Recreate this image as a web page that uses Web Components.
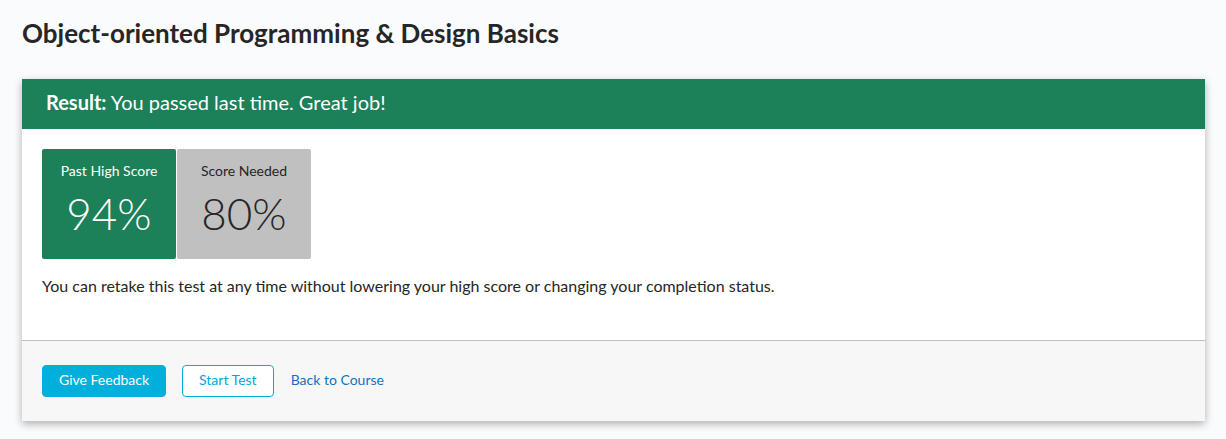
<!DOCTYPE html>
<html lang="en">
<head>
<meta charset="utf-8">
<title>Object-oriented Programming &amp; Design Basics</title>
<style>
  body { margin: 0; background: #fafbfd; color: #262626; font-family: Lato, "Open Sans", sans-serif; font-size: 16px; line-height: 24px; }
</style>
</head>
<body>
<test-page>
  <span slot="title">Object-oriented Programming &amp; Design Basics</span>
  <result-card>
    <span slot="status">You passed last time. Great job!</span>
    <score-tile tone="passed" label="Past High Score">94%</score-tile>
    <score-tile label="Score Needed">80%</score-tile>
    <span slot="note">You can retake this test at any time without lowering your high score or changing your completion status.</span>
    <action-button slot="actions" kind="primary">Give Feedback</action-button>
    <action-button slot="actions">Start Test</action-button>
    <action-link slot="actions" to="#course">Back to Course</action-link>
  </result-card>
</test-page>

<script>
  class BaseElement extends HTMLElement {
    constructor() {
      super();
      const template = document.createElement('template');
      template.innerHTML = this.constructor.markup;
      this.attachShadow({ mode: 'open' }).append(template.content.cloneNode(true));
    }
  }

  class TestPage extends BaseElement {
    static markup = `
      <style>
        :host { display: block; }
        main { padding: 15px 21px 18px 22px; }
        h1 { margin: 0 0 28px; font-size: 26px; line-height: 36px; font-weight: 700; }
      </style>
      <main>
        <h1><slot name="title"></slot></h1>
        <slot></slot>
      </main>`;
  }

  class ResultCard extends BaseElement {
    static markup = `
      <style>
        :host { display: block; background: #fff; box-shadow: 0 3px 8px rgba(0, 0, 0, .3); }
        header { padding: 9px 24px 13px; background: #1c8058; color: #fff; font-size: 20px; line-height: 28px; }
        strong { font-weight: 700; }
        .body { padding: 20px 20px 42px; }
        .scores { display: flex; gap: 1px; }
        p { margin: 15px 0 0; }
        footer { display: flex; align-items: center; gap: 16px; padding: 24px 20px; border-top: 1px solid #bfbfbf; background: #f7f7f7; }
      </style>
      <header><strong>Result:</strong> <slot name="status"></slot></header>
      <div class="body">
        <div class="scores"><slot></slot></div>
        <p><slot name="note"></slot></p>
      </div>
      <footer><slot name="actions"></slot></footer>`;
  }

  class ScoreTile extends BaseElement {
    static markup = `
      <style>
        :host { display: block; box-sizing: border-box; width: 134px; padding: 12px 0 14px; border-radius: 2px; background: #c0c0c0; text-align: center; }
        :host([tone="passed"]) { background: #1c8058; color: #fff; }
        .label { font-size: 14px; line-height: 20px; }
        .value { font-size: 44px; line-height: 64px; font-weight: 300; }
      </style>
      <div class="label"></div>
      <div class="value"><slot></slot></div>`;
    connectedCallback() {
      this.shadowRoot.querySelector('.label').textContent = this.getAttribute('label');
    }
  }

  class ActionButton extends BaseElement {
    static markup = `
      <style>
        :host { display: block; }
        button { display: block; margin: 0; padding: 4px 16px 6px; border: 1px solid #00afdb; border-radius: 4px; background: #fff; color: #00a8d8; font: inherit; font-size: 14px; line-height: 20px; cursor: pointer; }
        :host([kind="primary"]) button { background: #00afdb; color: #fff; }
      </style>
      <button type="button"><slot></slot></button>`;
  }

  class ActionLink extends BaseElement {
    static markup = `
      <style>
        :host { display: block; }
        a { display: block; padding: 4px 0 6px; border: 1px solid transparent; color: #1170c9; font-size: 14px; line-height: 20px; text-decoration: none; }
      </style>
      <a><slot></slot></a>`;
    connectedCallback() {
      this.shadowRoot.querySelector('a').href = this.getAttribute('to');
    }
  }

  customElements.define('test-page', TestPage);
  customElements.define('result-card', ResultCard);
  customElements.define('score-tile', ScoreTile);
  customElements.define('action-button', ActionButton);
  customElements.define('action-link', ActionLink);
</script>
</body>
</html>
